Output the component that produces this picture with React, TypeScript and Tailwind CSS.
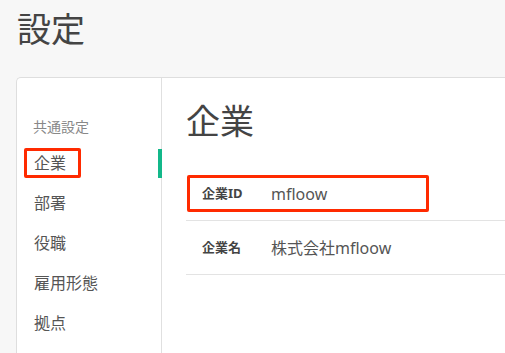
const font = "font-['Noto_Sans','Noto_Sans_CJK_JP',sans-serif]";

const menu = ["企業", "部署", "役職", "雇用形態", "拠点"];

const rows = [
  { label: "企業ID", value: "mfloow", marked: true },
  { label: "企業名", value: "株式会社mfloow", marked: false },
];

export default function App() {
  return (
    <div className={`${font} h-[353px] w-[505px] overflow-hidden bg-[#f7f7f7] pl-4 text-[#444]`}>
      <h1 className="pt-[9px] pl-[1px] text-[34px] leading-[40px] text-[#444]">設定</h1>

      <div className="mt-[28px] flex h-[300px] rounded-tl-[5px] border-t border-l border-[#dedede] bg-white">
        {/* sidebar */}
        <nav className="w-[145px] shrink-0 border-r border-[#e0e0e0] pt-[39px]">
          <p className="pl-[16px] text-[14px] leading-[20px] text-[#888]">共通設定</p>
          <ul className="mt-[6px]">
            {menu.map((item, i) => (
              <li key={item} className="relative flex h-[40px] items-center pl-[17px] text-[16px] text-[#555]">
                {item}
                {i === 0 && (
                  <>
                    <span className="absolute top-[5px] left-[7px] h-[30px] w-[57px] rounded-[2px] border-[3px] border-[#ff2a00]" />
                    <span className="absolute top-[6px] right-[-1px] h-[29px] w-[4px] bg-[#13b88a]" />
                  </>
                )}
              </li>
            ))}
          </ul>
        </nav>

        {/* content */}
        <main className="flex-1 pl-[24px]">
          <h2 className="pt-[22px] text-[34px] leading-[42px] text-[#444]">企業</h2>
          <div className="mt-[25px]">
            {rows.map((row) => (
              <div key={row.label} className="relative flex h-[54px] items-center border-b border-[#e3e3e3] pl-[16px]">
                <span className="w-[69px] text-[13px] font-bold text-[#444]">{row.label}</span>
                <span className="text-[16px] text-[#555]">{row.value}</span>
                {row.marked && (
                  <span className="absolute top-[8px] left-[1px] h-[37px] w-[242px] rounded-[2px] border-[3px] border-[#ff2a00]" />
                )}
              </div>
            ))}
          </div>
        </main>
      </div>
    </div>
  );
}
